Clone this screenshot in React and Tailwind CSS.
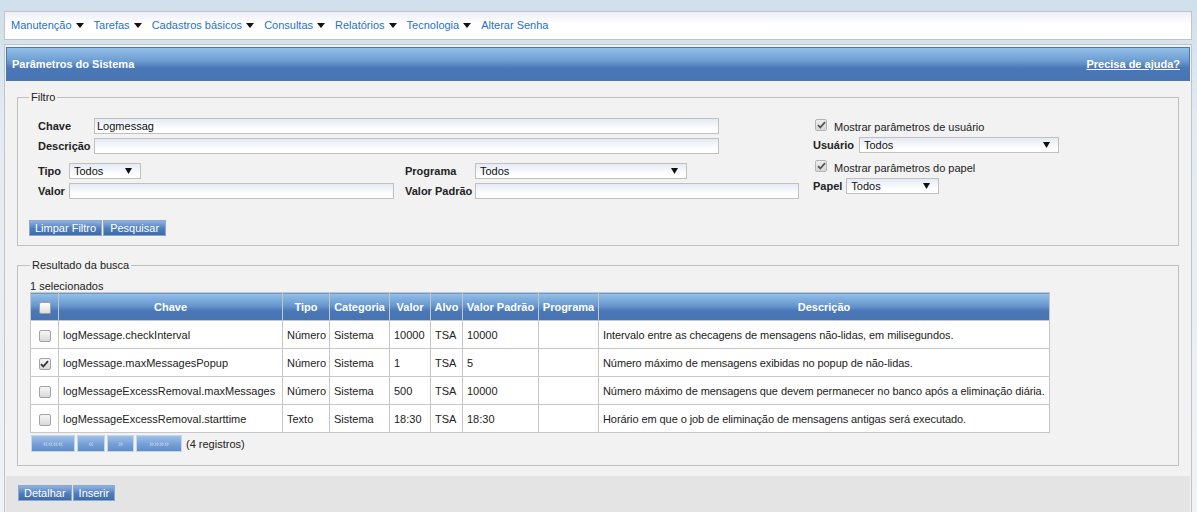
import React from 'react';

const navItems = ['Manutenção', 'Tarefas', 'Cadastros básicos', 'Consultas', 'Relatórios', 'Tecnologia'];

const rows = [
  { chave: 'logMessage.checkInterval', tipo: 'Número', categoria: 'Sistema', valor: '10000', alvo: 'TSA', padrao: '10000', descricao: 'Intervalo entre as checagens de mensagens não-lidas, em milisegundos.' },
  { chave: 'logMessage.maxMessagesPopup', tipo: 'Número', categoria: 'Sistema', valor: '1', alvo: 'TSA', padrao: '5', descricao: 'Número máximo de mensagens exibidas no popup de não-lidas.', checked: true },
  { chave: 'logMessageExcessRemoval.maxMessages', tipo: 'Número', categoria: 'Sistema', valor: '500', alvo: 'TSA', padrao: '10000', descricao: 'Número máximo de mensagens que devem permanecer no banco após a eliminação diária.' },
  { chave: 'logMessageExcessRemoval.starttime', tipo: 'Texto', categoria: 'Sistema', valor: '18:30', alvo: 'TSA', padrao: '18:30', descricao: 'Horário em que o job de eliminação de mensagens antigas será executado.' },
];

// shared look of the old-school text fields
const field = 'h-[16px] border border-[#c0c0c0] bg-[linear-gradient(to_bottom,#e4eaf4,#ffffff_75%)] text-[11px] leading-[14px] text-[#111]';
const btn = 'h-[16px] px-[5px] text-[11px] leading-[14px] text-white border border-[#8aa9d2] bg-[linear-gradient(to_bottom,#8fb3e0,#4f7dbb_55%,#3f6aa8)]';

function Caret() {
  return (
    <svg width="8" height="5" viewBox="0 0 8 5" className="ml-[4px]">
      <path d="M0 0h8L4 5z" fill="#111" />
    </svg>
  );
}

function Select({ className }) {
  return (
    <div className={`${field} ${className} flex items-center justify-between pl-[4px] pr-[8px]`}>
      <span>Todos</span>
      <svg width="7" height="6" viewBox="0 0 7 6">
        <path d="M0 0h7L3.5 6z" fill="#111" />
      </svg>
    </div>
  );
}

function Tick({ color = '#333' }) {
  return (
    <svg width="9" height="8" viewBox="0 0 9 8">
      <path d="M1 4.2l2.3 2.3L8 1.2" fill="none" stroke={color} strokeWidth="1.8" />
    </svg>
  );
}

function Box({ checked, muted }) {
  return (
    <span
      className={`inline-flex w-[12px] h-[12px] items-center justify-center rounded-[2px] border ${
        muted ? 'border-[#b4b4b4] bg-[linear-gradient(to_bottom,#eeeeee,#d6d6d6)]' : 'border-[#a3a3a3] bg-[linear-gradient(to_bottom,#f6f6f6,#d9d9d9)]'
      }`}
    >
      {checked && <Tick color={muted ? '#555' : '#333'} />}
    </span>
  );
}

const th = 'h-[28px] border border-[#c6c6c6] px-[3px] font-bold text-white text-center whitespace-nowrap bg-[linear-gradient(to_bottom,#93c1e9,#6897cf_45%,#4a77b5_65%,#4773b2)]';
const td = 'h-[28px] border border-[#c6c6c6] px-[4px] bg-white whitespace-nowrap';

export default function App() {
  return (
    <div className="h-[512px] overflow-hidden pt-[11px] pl-[4px] pr-[5px] bg-[linear-gradient(to_bottom,#cfdfeb,#e3ebf2_120px,#eef3f7)] font-['Liberation_Sans',Arial,sans-serif] text-[11px] leading-[14px] text-[#222]">
      {/* top menu */}
      <div className="h-[29px] flex items-center gap-[10px] pl-[6px] pb-[1px] border border-[#c3c3c3] bg-[linear-gradient(to_bottom,#eceef8,#ffffff_45%)]">
        {navItems.map((item) => (
          <span key={item} className="flex items-center text-[#2571c9]">
            {item}
            <Caret />
          </span>
        ))}
        <span className="text-[#2571c9]">Alterar Senha</span>
      </div>

      {/* main panel */}
      <div className="mt-[4px] h-[480px] border border-[#c3c3c3] bg-[#f2f2f2] pt-[2px] px-[1px] flex flex-col">
        <div className="h-[34px] shrink-0 flex items-center justify-between pl-[5px] pr-[9px] border border-[#4a76b2] bg-[linear-gradient(to_bottom,#93c0e8,#6e9dd3_40%,#4a78b6_62%,#4874b2)] text-white font-bold">
          <span>Parâmetros do Sistema</span>
          <span className="underline">Precisa de ajuda?</span>
        </div>

        {/* filter */}
        <fieldset className="mt-[10px] mx-[11px] border border-[#c0c0c0] pl-[11px] pr-[10px] pt-[14px] pb-[9px]">
          <legend className="px-[2px] leading-[13px]">Filtro</legend>
          <div className="flex">
            <div className="ml-[9px] w-[761px] flex flex-col font-bold">
              <div className="flex items-center">
                <span className="w-[56px]">Chave</span>
                <div className={`${field} w-[625px] px-[2px] font-normal`}>Logmessag</div>
              </div>
              <div className="flex items-center mt-[4px]">
                <span className="w-[56px]">Descrição</span>
                <div className={`${field} w-[625px]`} />
              </div>
              <div className="flex items-center mt-[9px]">
                <div className="w-[367px] flex items-center">
                  <span className="w-[31px]">Tipo</span>
                  <Select className="w-[72px] font-normal" />
                </div>
                <span className="w-[70px]">Programa</span>
                <Select className="w-[212px] font-normal" />
              </div>
              <div className="flex items-center mt-[4px]">
                <div className="w-[367px] flex items-center">
                  <span className="w-[31px]">Valor</span>
                  <div className={`${field} w-[325px]`} />
                </div>
                <span className="w-[70px]">Valor Padrão</span>
                <div className={`${field} w-[324px]`} />
              </div>
            </div>

            <div className="ml-[14px] flex flex-col">
              <div className="h-[14px] flex items-center pl-[2px]">
                <Box checked muted />
                <span className="ml-[7px] mt-[3px]">Mostrar parâmetros de usuário</span>
              </div>
              <div className="flex items-center mt-[5px]">
                <span className="font-bold mr-[5px]">Usuário</span>
                <Select className="w-[200px]" />
              </div>
              <div className="h-[14px] flex items-center pl-[2px] mt-[6px]">
                <Box checked muted />
                <span className="ml-[7px] mt-[3px]">Mostrar parâmetros do papel</span>
              </div>
              <div className="flex items-center mt-[5px]">
                <span className="font-bold mr-[4px]">Papel</span>
                <Select className="w-[93px]" />
              </div>
            </div>
          </div>
          <div className="flex gap-[1px] mt-[21px]">
            <button className={btn}>Limpar Filtro</button>
            <button className={`${btn} px-[6px]`}>Pesquisar</button>
          </div>
        </fieldset>

        {/* results */}
        <fieldset className="mt-[13px] mx-[11px] border border-[#c0c0c0] pl-[12px] pr-[10px] pt-[8px] pb-[13px]">
          <legend className="px-[2px] leading-[13px]">Resultado da busca</legend>
          <div className="h-[12px] leading-[12px]">1 selecionados</div>
          <table className="w-[1020px] table-fixed border-collapse text-[11px]">
            <colgroup>
              <col className="w-[28px]" />
              <col className="w-[224px]" />
              <col className="w-[47px]" />
              <col className="w-[60px]" />
              <col className="w-[41px]" />
              <col className="w-[32px]" />
              <col className="w-[76px]" />
              <col className="w-[60px]" />
              <col />
            </colgroup>
            <thead>
              <tr>
                <th className={th}>
                  <span className="inline-flex w-[12px] h-[12px] align-middle rounded-[2px] border border-[#a0a0a0] bg-[linear-gradient(to_bottom,#ffffff,#dcdcdc)]" />
                </th>
                <th className={th}>Chave</th>
                <th className={th}>Tipo</th>
                <th className={th}>Categoria</th>
                <th className={th}>Valor</th>
                <th className={th}>Alvo</th>
                <th className={th}>Valor Padrão</th>
                <th className={th}>Programa</th>
                <th className={th}>Descrição</th>
              </tr>
            </thead>
            <tbody>
              {rows.map((r) => (
                <tr key={r.chave}>
                  <td className={`${td} text-center`}>
                    <span className="inline-flex align-middle">
                      <Box checked={r.checked} />
                    </span>
                  </td>
                  <td className={td}>{r.chave}</td>
                  <td className={td}>{r.tipo}</td>
                  <td className={td}>{r.categoria}</td>
                  <td className={td}>{r.valor}</td>
                  <td className={td}>{r.alvo}</td>
                  <td className={td}>{r.padrao}</td>
                  <td className={td}></td>
                  <td className={`${td} px-[3px] tracking-[-0.08px]`}>{r.descricao}</td>
                </tr>
              ))}
            </tbody>
          </table>
          <div className="flex items-center gap-[2px] mt-[2px] ml-[1px] h-[17px]">
            {[['««««', 'w-[44px]'], ['«', 'w-[28px]'], ['»', 'w-[27px]'], ['»»»»', 'w-[46px]']].map(([label, w]) => (
              <span
                key={label}
                className={`${w} h-[17px] flex items-center justify-center text-[9px] text-[#c9daf0] border border-[#c5d6ea] bg-[linear-gradient(to_bottom,#9ec0ea,#769fd5_55%,#5f8dca)]`}
              >
                {label}
              </span>
            ))}
            <span className="ml-[2px]">(4 registros)</span>
          </div>
        </fieldset>

        {/* bottom actions */}
        <div className="mt-[10px] flex-1 bg-[#e4e4e4] pl-[12px] pt-[9px]">
          <div className="flex gap-[1px]">
            <button className={btn}>Detalhar</button>
            <button className={btn}>Inserir</button>
          </div>
        </div>
      </div>
    </div>
  );
}
